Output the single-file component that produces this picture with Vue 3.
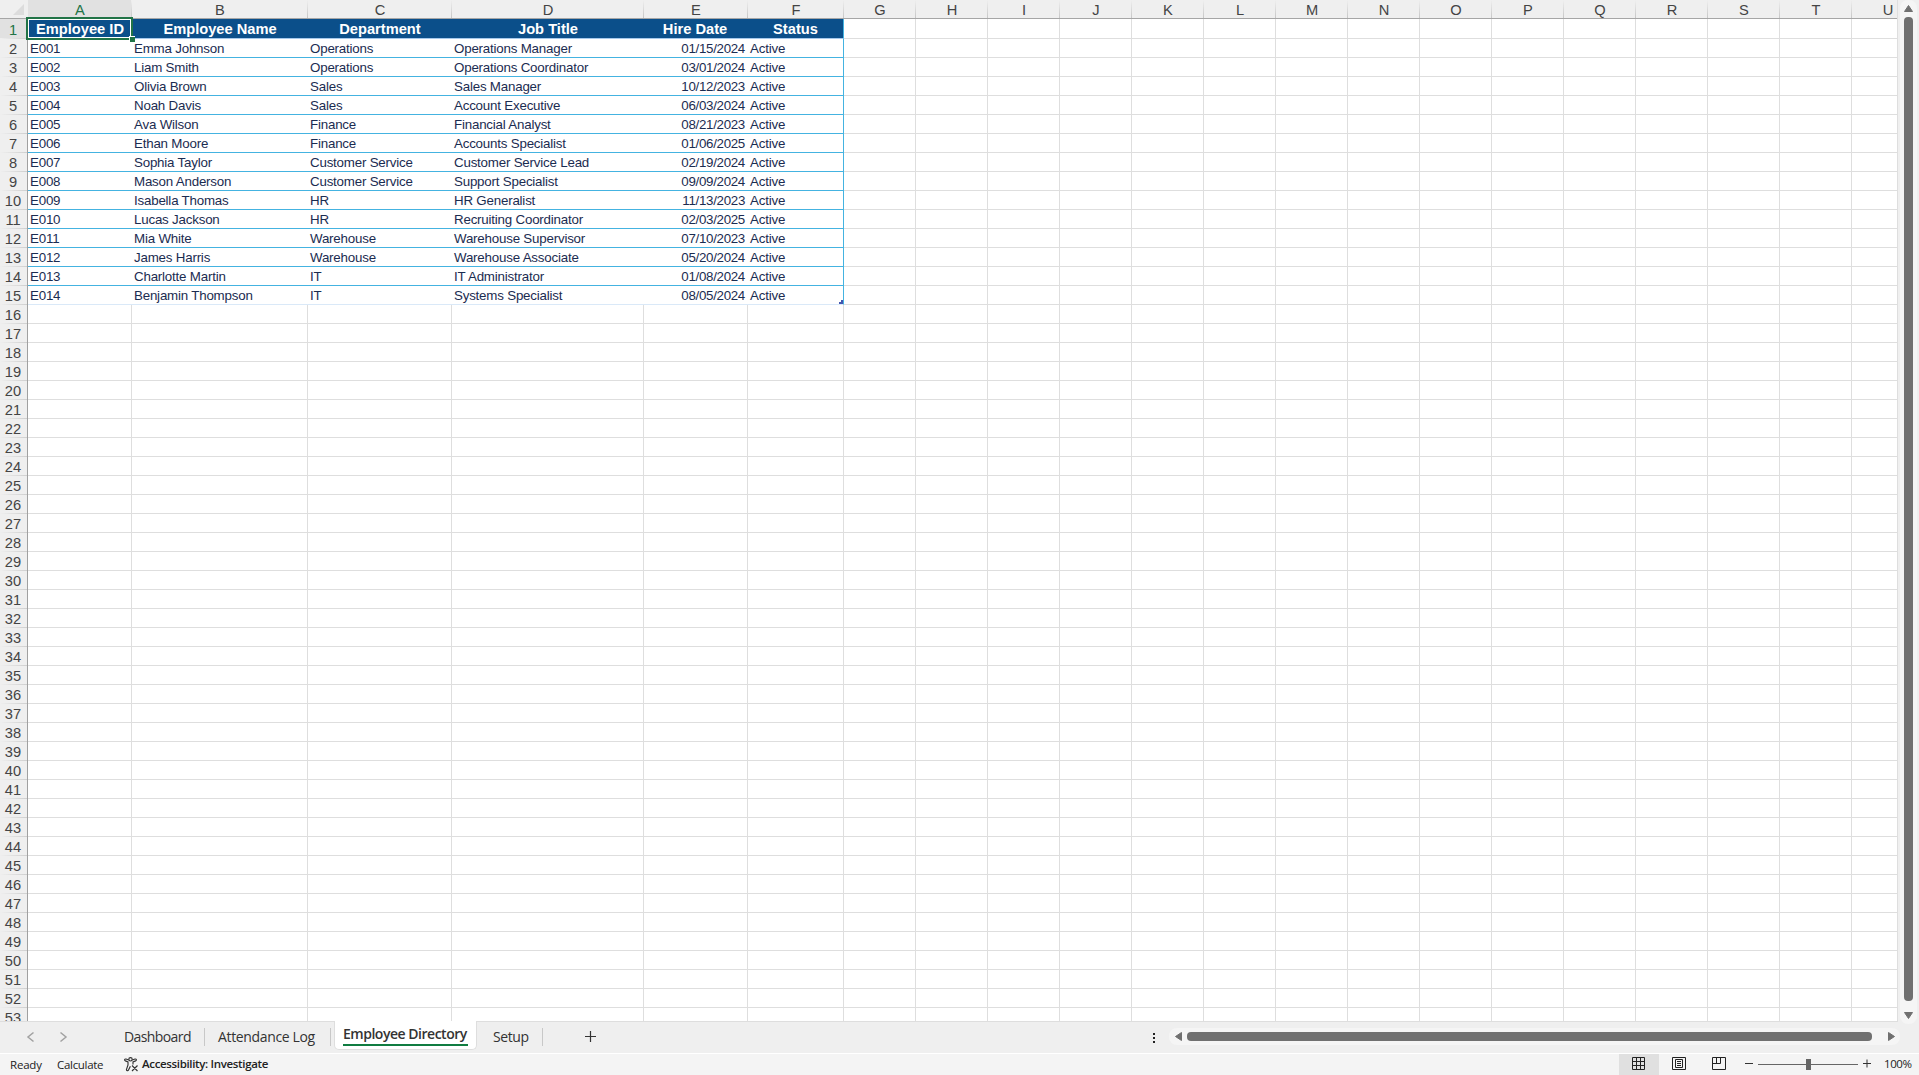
<script setup>
const columns = [
  { name: 'A', width: 104 },
  { name: 'B', width: 176 },
  { name: 'C', width: 144 },
  { name: 'D', width: 192 },
  { name: 'E', width: 104 },
  { name: 'F', width: 96 },
  ...'GHIJKLMNOPQRSTU'.split('').map((name) => ({ name, width: 72 })),
]
const headings = ['Employee ID', 'Employee Name', 'Department', 'Job Title', 'Hire Date', 'Status']
const employees = [
  ['E001', 'Emma Johnson', 'Operations', 'Operations Manager', '01/15/2024', 'Active'],
  ['E002', 'Liam Smith', 'Operations', 'Operations Coordinator', '03/01/2024', 'Active'],
  ['E003', 'Olivia Brown', 'Sales', 'Sales Manager', '10/12/2023', 'Active'],
  ['E004', 'Noah Davis', 'Sales', 'Account Executive', '06/03/2024', 'Active'],
  ['E005', 'Ava Wilson', 'Finance', 'Financial Analyst', '08/21/2023', 'Active'],
  ['E006', 'Ethan Moore', 'Finance', 'Accounts Specialist', '01/06/2025', 'Active'],
  ['E007', 'Sophia Taylor', 'Customer Service', 'Customer Service Lead', '02/19/2024', 'Active'],
  ['E008', 'Mason Anderson', 'Customer Service', 'Support Specialist', '09/09/2024', 'Active'],
  ['E009', 'Isabella Thomas', 'HR', 'HR Generalist', '11/13/2023', 'Active'],
  ['E010', 'Lucas Jackson', 'HR', 'Recruiting Coordinator', '02/03/2025', 'Active'],
  ['E011', 'Mia White', 'Warehouse', 'Warehouse Supervisor', '07/10/2023', 'Active'],
  ['E012', 'James Harris', 'Warehouse', 'Warehouse Associate', '05/20/2024', 'Active'],
  ['E013', 'Charlotte Martin', 'IT', 'IT Administrator', '01/08/2024', 'Active'],
  ['E014', 'Benjamin Thompson', 'IT', 'Systems Specialist', '08/05/2024', 'Active'],
]
const rows = Array.from({ length: 53 }, (_, i) => ({
  number: i + 1,
  kind: i === 0 ? 'heading' : i <= employees.length ? 'record' : 'blank',
  values: i === 0 ? headings : employees[i - 1] || [],
}))
</script>

<template>
  <div class="app">
    <div class="workspace">
      <div class="sheet">
        <div class="line col-heads">
          <div class="corner"><svg width="28" height="18"><path d="M24 4v11H13z" fill="#dcdcdc" /></svg></div>
          <div
            v-for="c in columns"
            :key="c.name"
            class="col-head"
            :class="{ chosen: c.name === 'A' }"
            :style="{ width: c.width + 'px' }"
          >{{ c.name }}</div>
        </div>
        <div v-for="r in rows" :key="r.number" class="line" :class="r.kind">
          <div class="row-head" :class="{ chosen: r.number === 1 }">{{ r.number }}</div>
          <div
            v-for="(c, i) in columns"
            :key="c.name"
            class="cell"
            :class="{ table: i < 6, edge: i === 5, date: i === 4, active: r.number === 1 && i === 0 }"
            :style="{ width: c.width + 'px' }"
          >
            <span>{{ r.values[i] }}</span>
            <i v-if="r.number === 15 && i === 5" class="resize"></i>
          </div>
        </div>
      </div>
      <div class="vscroll">
        <svg width="17" height="1024">
          <path d="M8.500 5.500L12.500 11.500H4.500Z" fill="#707070" stroke="#707070" stroke-linejoin="round" />
          <rect x="4" y="17" width="9" height="984" rx="4" fill="#707070" />
          <path d="M4.500 1012.500H12.500L8.500 1018.500Z" fill="#707070" stroke="#707070" stroke-linejoin="round" />
        </svg>
      </div>
    </div>

    <div class="tabbar">
      <svg class="nav" width="80" height="31">
        <path d="M33.500 10.500L28 15L33.500 19.500M60.500 10.500L66 15L60.500 19.500" fill="none" stroke="#a2a2a2" stroke-width="1.500" />
      </svg>
      <div class="tab dash"><span>Dashboard</span></div>
      <div class="tab log"><span>Attendance Log</span></div>
      <div class="tab current"><span>Employee Directory</span></div>
      <div class="tab setup"><span>Setup</span></div>
      <svg class="add" width="12" height="12"><path d="M5.500 0v11M0 5.500h11" stroke="#333" stroke-width="1.200" /></svg>
      <div class="dots"><i></i><i></i><i></i></div>
      <div class="hscroll">
        <svg width="731" height="17">
          <path d="M6.500 8.500L12.500 4.500V12.500Z" fill="#707070" stroke="#707070" stroke-linejoin="round" />
          <rect x="18" y="4" width="685" height="9" rx="4" fill="#707070" />
          <path d="M719.500 4.500L725.500 8.500L719.500 12.500Z" fill="#707070" stroke="#707070" stroke-linejoin="round" />
        </svg>
      </div>
    </div>

    <div class="status">
      <span class="ready">Ready</span>
      <span class="calc">Calculate</span>
      <svg class="person" width="15" height="15" fill="none" stroke="#333" stroke-width="1.150">
        <circle cx="6.500" cy="2.300" r="1.700" />
        <path d="M4.800 3L2 2C.4 1.700 .2 3.400 1.400 3.900L4 5V8L2.500 12.400C2.200 13.800 4 14.200 4.500 13L6.400 9.300M8.200 3L11 2C12.600 1.700 12.800 3.400 11.600 3.900L9 5V7.500M8 8.500L13.500 14M13.500 8.500L8 14" />
      </svg>
      <span class="access">Accessibility: Investigate</span>
      <div class="views">
        <div class="view on">
          <svg width="14" height="14" fill="none" stroke="#222"><path d="M.5 .5h12v12H.5zM4.500 .5v12M8.500 .5v12M.5 4.500h12M.5 8.500h12" /></svg>
        </div>
        <div class="view">
          <svg width="14" height="14" fill="none" stroke="#222"><path d="M.5 .5h13v12H.5zM3.500 2.500h7v8h-7zM5 4.500h4M5 6.500h4M5 8.500h4" /></svg>
        </div>
        <div class="view">
          <svg width="14" height="14" fill="none" stroke="#222"><path d="M.5 .5h13v12H.5zM4.500 .5v6M.5 6.500h8v-6" /></svg>
        </div>
      </div>
      <svg class="zoom" width="130" height="21">
        <path d="M1 9.500h8M119 9.500h8M123 5.500v8" stroke="#333" />
        <path d="M14 10.500h100" stroke="#666" />
        <rect x="62" y="5" width="5" height="11" fill="#666" />
      </svg>
      <span class="percent">100%</span>
    </div>
  </div>
</template>

<style>
body { margin: 0; overflow: hidden; background: #efefef; }
</style>

<style scoped>
.app {
  width: 1919px;
  height: 1075px;
  display: flex;
  flex-direction: column;
  background: #efefef;
  font-family: "Liberation Sans", Arial, sans-serif;
}
.workspace { display: flex; height: 1022px; flex: none; }
.sheet {
  width: 1898px;
  height: 1022px;
  box-sizing: border-box;
  overflow: hidden;
  border-right: 1px solid #dedede;
  border-bottom: 1px solid #dedede;
  background: #fff;
}
.line { display: flex; width: max-content; height: 19px; }
.line.heading { height: 20px; }
.col-heads { background: #efefef; }
.corner { width: 28px; height: 18px; border-bottom: 1px solid #a6a6a6; }
.corner svg { display: block; }
.col-head {
  box-sizing: border-box;
  border-bottom: 1px solid #a6a6a6;
  background: linear-gradient(#efefef, #c6c6c6) right / 1px 100% no-repeat;
  text-align: center;
  font-size: 14.667px;
  line-height: 20px;
  color: #444;
}
.col-head.chosen { background-color: #e1e1e1; color: #217346; }
.row-head {
  box-sizing: border-box;
  width: 28px;
  padding-right: 1px;
  border-right: 1px solid #a0a0a0;
  background: linear-gradient(90deg, #efefef, #cfcfcf) bottom / 100% 1px no-repeat #efefef;
  text-align: center;
  font-size: 14.667px;
  line-height: 20px;
  color: #444;
}
.row-head.chosen { background-color: #e1e1e1; color: #217346; line-height: 22px; }
.cell {
  position: relative;
  box-sizing: border-box;
  padding: 0 2px;
  border-right: 1px solid #dedede;
  border-bottom: 1px solid #dedede;
  font-size: 13.333px;
  letter-spacing: -0.2px;
  line-height: 19px;
  white-space: nowrap;
  color: #1b2c51;
}
.table { border-right: 0; }
.blank .table { border-right: 1px solid #dedede; }
.record .table { border-bottom-color: #44b3e1; }
.table.edge { border-right: 1px solid #44b3e1; }
.blank .table.edge { border-right-color: #dedede; }
.record:nth-child(16) .table { border-bottom-color: #dae9f8; }
.record .date { text-align: right; padding-right: 3px; letter-spacing: -0.3px; }
.heading .table {
  background: #0b4f8a;
  border-bottom-color: #a6c9ec;
  color: #fff;
  font-size: 14.667px;
  font-weight: 700;
  letter-spacing: 0;
  line-height: 20px;
  text-align: center;
}
.heading .date { padding-right: 4px; }
.active::before {
  content: "";
  position: absolute;
  z-index: 2;
  left: -2px;
  top: -2px;
  width: 101px;
  height: 17px;
  border: 2px solid #217346;
  outline: 1px solid #fff;
  outline-offset: -3px;
  padding: 1px;
}
.active::after {
  content: "";
  position: absolute;
  z-index: 3;
  right: -3px;
  bottom: -4px;
  width: 5px;
  height: 5px;
  background: #217346;
  border-left: 1px solid #fff;
  border-top: 1px solid #fff;
}
.resize {
  position: absolute;
  right: 0;
  bottom: 0;
  width: 4px;
  height: 4px;
  background: #4457b0;
  clip-path: polygon(100% 0, 100% 100%, 0 100%, 0 50%, 50% 50%, 50% 0);
}
.vscroll { width: 17px; height: 1024px; margin-left: 2px; border-radius: 8px; background: #f5f5f5; z-index: 1; }
.vscroll svg, .hscroll svg { display: block; }

.tabbar {
  display: flex;
  flex: none;
  height: 31px;
  border-bottom: 1px solid #fff;
  font-family: "Open Sans", "Noto Sans", sans-serif;
  font-size: 14px;
  color: #333;
}
.nav { flex: none; }
.tab { box-sizing: border-box; flex: none; display: flex; white-space: nowrap; line-height: 30px; }
.tab:not(.current)::after { content: ""; width: 1px; height: 18px; margin: 6px 0 0 auto; background: #c8c8c8; }
.dash { width: 125px; padding-left: 44px; letter-spacing: -0.6px; }
.log { width: 126px; padding-left: 13px; letter-spacing: -0.35px; }
.current {
  width: 143px;
  height: 29px;
  margin: -1px 0 0 3px;
  padding-left: 8px;
  border: 1px solid #dedede;
  border-top: 0;
  border-radius: 0 0 5px 5px;
  background: #fff;
  font-weight: 600;
  letter-spacing: -0.48px;
  line-height: 25px;
}
.current span { height: 23px; width: 125px; border-bottom: 2px solid #107c41; }
.setup { width: 66px; padding-left: 16px; letter-spacing: -0.4px; }
.add { flex: none; margin: 9px 0 0 42px; }
.dots { flex: none; display: flex; flex-direction: column; gap: 2px; margin: 11px 0 0 556px; width: 2px; }
.dots i { width: 2px; height: 2px; background: #222; }
.hscroll { flex: none; width: 731px; height: 17px; margin: 6px 0 0 14px; border-radius: 8px; background: #f5f5f5; }

.status {
  display: flex;
  flex: none;
  height: 21px;
  background: #f4f4f4;
  font-family: "Open Sans", "Noto Sans", sans-serif;
  font-size: 11.500px;
  line-height: 21px;
  white-space: nowrap;
  color: #222;
}
.ready { width: 47px; padding-left: 10px; letter-spacing: -0.2px; line-height: 22px; }
.calc { width: 67px; letter-spacing: -0.3px; line-height: 22px; }
.person { margin-top: 3px; }
.access { margin-left: 3px; width: 140px; font-weight: 600; letter-spacing: -0.34px; line-height: 20px; }
.views { display: flex; margin-left: 1337px; }
.view { width: 40px; height: 21px; }
.view svg { display: block; margin: 3px 0 0 13px; }
.view.on { background: #e0e0e0; }
.zoom { margin-left: 5px; }
.percent { margin-left: 10px; letter-spacing: -0.4px; line-height: 20px; }
</style>
